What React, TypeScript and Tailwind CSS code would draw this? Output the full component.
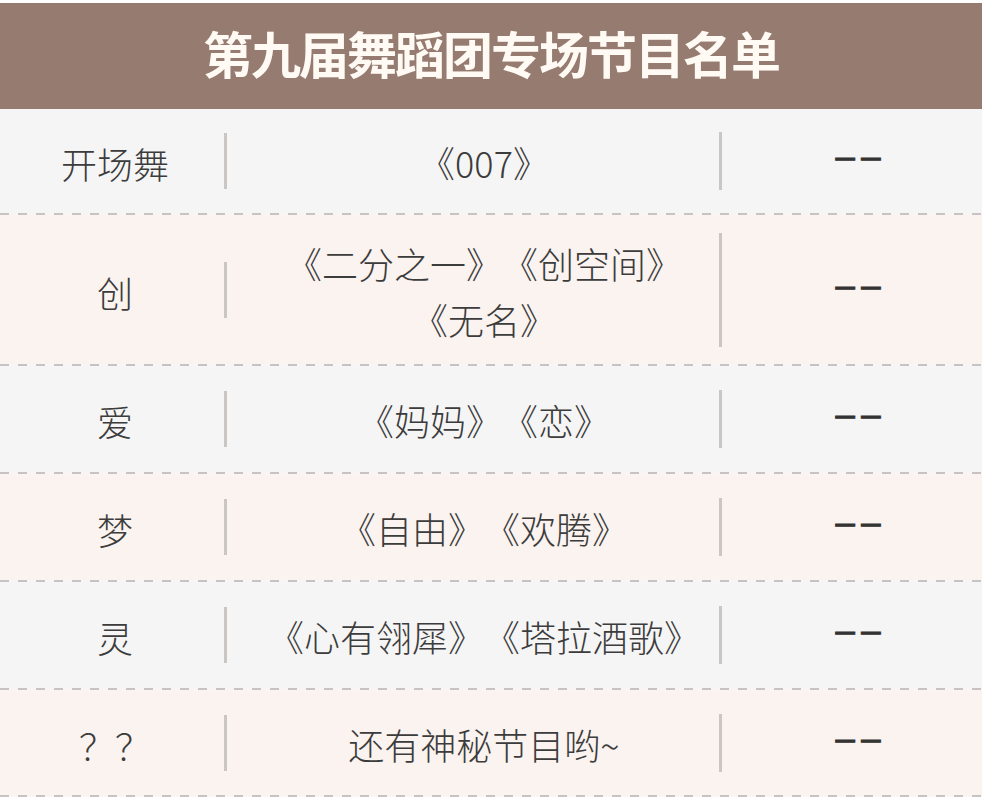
const rows: { name: string; lines: string[]; h: string; bg: string }[] = [
  { name: "开场舞", lines: ["《007》"], h: "h-[104px]", bg: "bg-[#f6f5f5]" },
  { name: "创", lines: ["《二分之一》《创空间》", "《无名》"], h: "h-[149px]", bg: "bg-[#fbf3f0]" },
  { name: "爱", lines: ["《妈妈》《恋》"], h: "h-[106px]", bg: "bg-[#f6f5f5]" },
  { name: "梦", lines: ["《自由》《欢腾》"], h: "h-[106px]", bg: "bg-[#fbf3f0]" },
  { name: "灵", lines: ["《心有翎犀》《塔拉酒歌》"], h: "h-[106px]", bg: "bg-[#f6f5f5]" },
  { name: "？？", lines: ["还有神秘节目哟~"], h: "h-[105px]", bg: "bg-[#fbf3f0]" },
];

function Dashes() {
  return (
    <div className="h-[2px] bg-[#f8f5f4] bg-[linear-gradient(to_right,#c6c3c2_9px,transparent_9px)] bg-[length:18px_2px]" />
  );
}

export default function App() {
  return (
    <div
      className="w-[987px] h-[804px] bg-white overflow-hidden [text-spacing-trim:space-all]"
      style={{ fontFamily: '"Noto Sans CJK SC", "Noto Sans", sans-serif' }}
    >
      <div className="w-[982px] pt-[3px]">
        <div className="h-[106px] bg-[#967b70] flex items-center justify-center pb-[8px]">
          <h1 className="text-[50px] font-bold text-[#fffaf4] tracking-[-2px] leading-none">
            第九届舞蹈团专场节目名单
          </h1>
        </div>
        {rows.map((r, i) => (
          <div key={i}>
            {i > 0 && <Dashes />}
            <div className={`${r.h} ${r.bg} flex items-center text-[#3c3c3c] text-[36px] font-light`}>
              <div className="w-[224px] text-center leading-none pt-[4px] pl-[6px]">{r.name}</div>
              <div className="w-[3px] h-[56px] bg-[#cac6c4]" />
              <div className="flex-1 flex items-stretch">
                <div className="flex-1 pl-[22px] text-center leading-[56px] pt-[2px]">
                  {r.lines.map((l, j) => (
                    <div key={j}>{l}</div>
                  ))}
                </div>
                <div className="w-[3px] bg-[#cac6c4]" />
                <div className="w-[260px] flex items-center justify-center pl-[12px]">
                  <span className="flex gap-[4px] text-[24px] font-bold leading-none -translate-y-[5px] text-[#333333] [-webkit-text-stroke:0.8px_#333333]">
                    <span>—</span>
                    <span>—</span>
                  </span>
                </div>
              </div>
            </div>
          </div>
        ))}
        <Dashes />
      </div>
    </div>
  );
}
